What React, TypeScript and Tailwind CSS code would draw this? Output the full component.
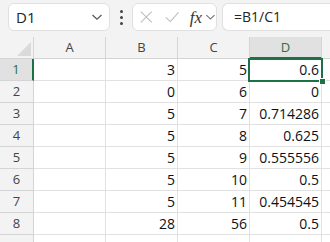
import React from "react";

const rows: [string, string, string][] = [
  ["3", "5", "0.6"],
  ["0", "6", "0"],
  ["5", "7", "0.714286"],
  ["5", "8", "0.625"],
  ["5", "9", "0.555556"],
  ["5", "10", "0.5"],
  ["5", "11", "0.454545"],
  ["28", "56", "0.5"],
  ["", "", ""],
];

const Chevron = ({ className }: { className?: string }) => (
  <svg width="12" height="8" viewBox="0 0 12 8" className={className}>
    <path d="M1.5 2 L6 6.2 L10.5 2" fill="none" stroke="currentColor" strokeWidth="1.2" />
  </svg>
);

export default function App() {
  return (
    <div
      className="w-[330px] h-[242px] overflow-hidden bg-[#f3f3f3] relative"
      style={{ fontFamily: '"Open Sans", "Noto Sans", sans-serif' }}
    >
      {/* toolbar */}
      <div className="h-[37px] flex items-start pt-[3px] pl-[8px]">
        <div className="w-[102px] shrink-0 h-[28px] bg-white border border-[#e0e0e0] rounded-[6px] flex items-center pl-[7px] pr-[6px]">
          <span className="text-[15px] text-[#242424] flex-1 leading-none">D1</span>
          <Chevron className="text-[#555]" />
        </div>
        <div className="w-[22px] shrink-0 h-[28px] flex flex-col items-center justify-center gap-[3px]">
          <div className="w-[3px] h-[3px] bg-[#444] rounded-full" />
          <div className="w-[3px] h-[3px] bg-[#444] rounded-full" />
          <div className="w-[3px] h-[3px] bg-[#444] rounded-full" />
        </div>
        <div className="w-[85px] shrink-0 h-[28px] bg-white border border-[#e0e0e0] rounded-[6px] flex items-center pl-[6px]">
          <svg width="16" height="16" viewBox="0 0 16 16">
            <path d="M2 2 L14 14 M14 2 L2 14" stroke="#bdbdbd" strokeWidth="1.2" fill="none" />
          </svg>
          <svg width="18" height="16" viewBox="0 0 18 16" className="ml-[10px]">
            <path d="M2 8.5 L7 13 L16 3" stroke="#bdbdbd" strokeWidth="1.2" fill="none" />
          </svg>
          <span
            className="ml-[10px] text-[17px] italic text-[#333] leading-none"
            style={{ fontFamily: '"Liberation Serif", "DejaVu Serif", serif' }}
          >
            fx
          </span>
          <Chevron className="text-[#777] ml-[3px]" />
        </div>
        <div className="ml-[5px] flex-1 h-[28px] bg-white border border-[#e0e0e0] rounded-l-[6px] border-r-0 flex items-center pl-[11px]">
          <span className="text-[14px] text-[#242424] leading-none">=B1/C1</span>
        </div>
      </div>

      {/* grid */}
      <div className="relative">
        {/* header row */}
        <div className="flex h-[22px]">
          <div className="w-[34px] shrink-0 h-full border-r border-b border-[#d4d4d4] relative">
            <svg width="14" height="14" viewBox="0 0 14 14" className="absolute left-[17px] top-[5px]">
              <path d="M14 0 L14 14 L0 14 Z" fill="#dadada" />
            </svg>
          </div>
          {["A", "B", "C", "D", ""].map((c, idx) => {
            const active = c === "D";
            return (
              <div
                key={idx}
                className={
                  "w-[72px] shrink-0 h-full border-r border-[#d4d4d4] flex items-center justify-center text-[13px] " +
                  (active
                    ? "bg-[#e1e1e1] text-[#1e7145] border-b-2 border-b-[#1e7145]"
                    : "text-[#444] border-b")
                }
              >
                <span className="leading-none">{c}</span>
              </div>
            );
          })}
        </div>

        {rows.map((r, i) => {
          const active = i === 0;
          return (
            <div key={i} className="flex h-[22px]">
              <div
                className={
                  "w-[34px] shrink-0 h-full border-b border-[#d4d4d4] flex items-center justify-center text-[13px] " +
                  (active
                    ? "bg-[#e1e1e1] text-[#1e7145] border-r-2 border-r-[#1e7145]"
                    : "text-[#444] border-r")
                }
              >
                <span className="leading-none">{i < 8 ? i + 1 : ""}</span>
              </div>
              {["", r[0], r[1], r[2], ""].map((v, j) => (
                <div
                  key={j}
                  className="w-[72px] shrink-0 h-full bg-white border-r border-b border-[#e1e1e1] flex items-end justify-end pr-[2px] pb-[3px] text-[14px] text-[#111]"
                >
                  <span className="leading-none">{v}</span>
                </div>
              ))}
            </div>
          );
        })}

        {/* selection */}
        <div className="absolute left-[248px] top-[21px] w-[75px] h-[24px] border-2 border-[#1e7145] pointer-events-none">
          <div className="absolute right-[-5px] bottom-[-5px] w-[7px] h-[7px] bg-[#1e7145] border border-white" />
        </div>
      </div>
    </div>
  );
}
